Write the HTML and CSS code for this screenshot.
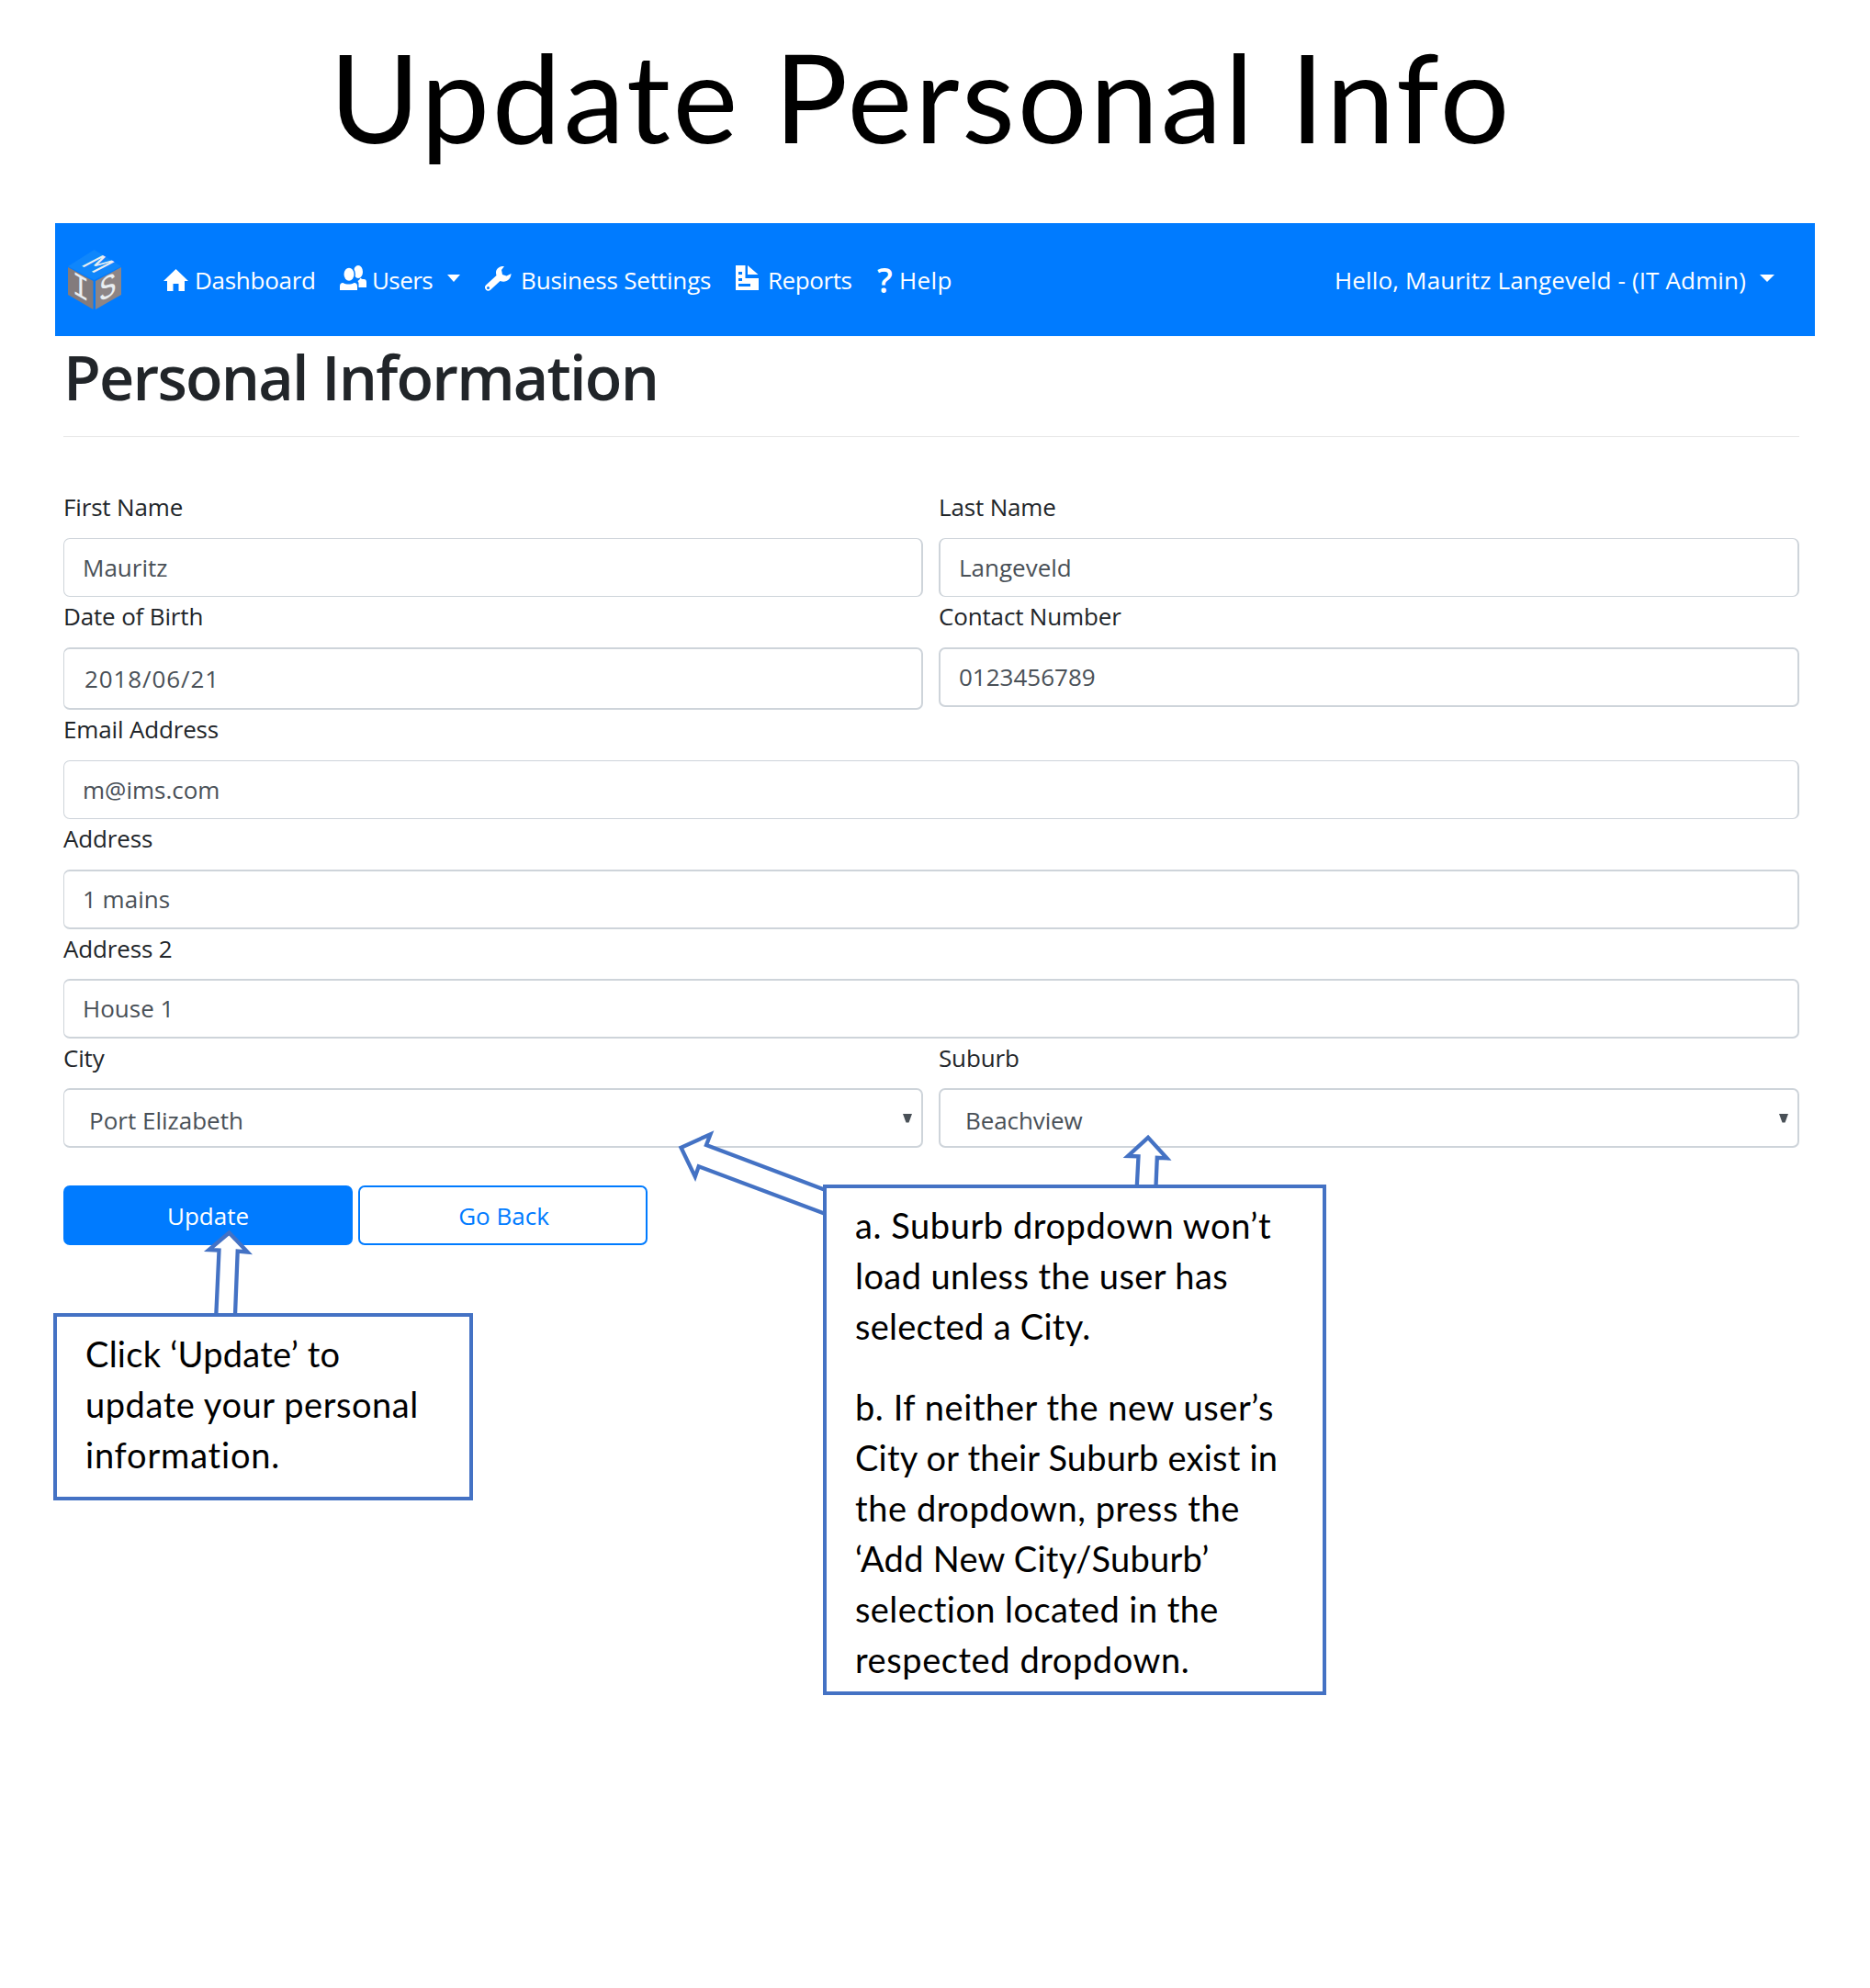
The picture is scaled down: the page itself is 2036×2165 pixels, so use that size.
FILE: index.html
```html
<!DOCTYPE html>
<html lang="en">
<head>
<meta charset="utf-8">
<title>Update Personal Info</title>
<link rel="stylesheet" href="styles.css">
</head>
<body>
<main class="page">
  <h1 class="page-title">Update Personal Info</h1>

  <header class="navbar">
    <svg class="logo" viewBox="0 0 60 68" width="60" height="68">
      <polygon points="29.5,1 59,19 29.5,34 1,19" fill="#0f86fb"/>
      <polygon points="1,20 28.5,35 28.5,66 1,50" fill="#837b7c"/>
      <polygon points="31,35 59,20 59,50 31,66" fill="#8d8586"/>
      <g class="logo-letters">
        <text transform="matrix(.87 .5 -1.1 .58 22.5 22.5)" font-size="31">M</text>
        <text transform="matrix(.87 .5 0 1 15 53)" font-size="36">I</text>
        <text transform="matrix(.87 -.5 0 1 44.5 53)" font-size="36">S</text>
      </g>
    </svg>
    <nav class="nav">
      <a class="nav-item home"><svg width="27" height="24" viewBox="0 0 27 24"><path d="M13.5 0 27 13h-4v11h-6.500v-8h-6v8H4V13H0z"/></svg><span class="t1">Dashboard</span></a>
      <a class="nav-item users"><svg width="29" height="27" viewBox="0 0 29 27"><ellipse cx="20" cy="7" rx="5" ry="7"/><path d="M20.500 24v-5l-1-2c1.500-1 2.500-2 3-3.500.8 1 2 1.500 3.500 1.500 2 0 3 1 3 3.500V24z"/><ellipse cx="10" cy="9.800" rx="7" ry="8.800" fill="#007bff"/><ellipse cx="10" cy="9.800" rx="5.500" ry="7"/><path d="M0 27v-4c0-2.500 1-4 3.500-4 3.500 2 8.500 2 12 0 2.500 0 3.500 1.500 3.500 4v4z"/></svg><span class="t2">Users</span><i class="caret"></i></a>
      <a class="nav-item wrench"><svg width="29" height="27" viewBox="0 0 29 27"><path fill-rule="evenodd" d="M21 0c-5-.5-9 2.500-9 7 0 1.200.2 2 .5 3L1 20.500c-1.500 1.500-1.300 3.500 0 5s3.500 1.700 5 .2L16.500 16c6 2.500 12-1.500 12-8l-5 2.500-4.500-1.500-1-5zM3.500 22a1.500 1.500 0 1 1 0 3 1.500 1.500 0 0 1 0-3z"/></svg><span class="t3">Business Settings</span></a>
      <a class="nav-item report"><svg width="25" height="27" viewBox="0 0 25 27"><path fill-rule="evenodd" d="M0 0h10.500v14H25v13H0zM3 7v3h4V7zm0 7v3h4v-3zm0 6v3h13v-3zM13 0l11.500 10H13z"/></svg><span class="t4">Reports</span></a>
      <a class="nav-item help"><b class="mark">?</b><span class="t5">Help</span></a>
    </nav>
    <a class="account"><span>Hello, Mauritz Langeveld - (IT Admin)</span><i class="caret"></i></a>
  </header>

  <section class="content">
    <h2 class="section-title">Personal Information</h2>
    <form class="form">
      <div class="field thin"><label>First Name</label><input value="Mauritz"></div>
      <div class="field thin right"><label>Last Name</label><input value="Langeveld"></div>
      <div class="field"><label>Date of Birth</label><input class="date" value="2018/06/21"></div>
      <div class="field right"><label>Contact Number</label><input class="phone" value="0123456789"></div>
      <div class="field wide thin"><label>Email Address</label><input value="m@ims.com"></div>
      <div class="field wide"><label>Address</label><input value="1 mains"></div>
      <div class="field wide snug"><label>Address 2</label><input value="House 1"></div>
      <div class="field snug"><label>City</label><div class="select"><select><option>Port Elizabeth</option></select><svg width="10" height="10" viewBox="0 0 10 10"><path d="M0 0h10L6.500 9.500h-3z"/></svg></div></div>
      <div class="field right snug"><label>Suburb</label><div class="select"><select class="tight"><option>Beachview</option></select><svg width="10" height="10" viewBox="0 0 10 10"><path d="M0 0h10L6.500 9.500h-3z"/></svg></div></div>
      <div class="actions">
        <button type="button" class="btn primary">Update</button>
        <button type="button" class="btn outline">Go Back</button>
      </div>
    </form>
  </section>

  <svg class="arrows" width="2036" height="2165" viewBox="0 0 2036 2165">
    <path d="M235.300 1432 238.500 1361.500 227.500 1361 249.500 1342.500 269.500 1363.500 258.700 1362.500 256 1432"/>
    <path d="M900 1296.500 769 1247 773.500 1235.300 741.500 1249.700 756.800 1281.500 760.700 1270.300 900 1322.500"/>
    <path d="M1237.800 1292 1239.500 1259.300 1228 1259 1250 1238.800 1270.500 1261.300 1259.800 1260.800 1258.500 1292"/>
  </svg>

  <aside class="note note-update">
    <p><span class="l2">Click ‘Update’ to</span><br><span class="l5">update your personal</span><br><span class="l8">information.</span></p>
  </aside>
  <aside class="note note-suburb">
    <p><span class="l5">a. Suburb dropdown won’t</span><br>load unless the user has<br><span class="l2">selected a City.</span></p>
    <p><span class="l5">b. If neither the new user’s</span><br><span class="l1">City or their Suburb exist in</span><br><span class="l5">the dropdown, press the</span><br><span class="l2">‘Add New City/Suburb’</span><br>selection located in the<br><span class="l5">respected dropdown.</span></p>
  </aside>
</main>
</body>
</html>
```
FILE: styles.css
```css
* { box-sizing: border-box; }

body {
  margin: 0;
  background: #fff;
  color: #212529;
  font: 26px/42px "Open Sans", "Noto Sans", sans-serif;
}

.page {
  position: relative;
  height: 2165px;
  padding-top: 24px;
  overflow: hidden;
}

.page-title {
  margin: 0 0 58px;
  padding-right: 31px;
  font: 400 134px/161px Lato, sans-serif;
  letter-spacing: 2.7px;
  text-align: center;
  color: #000;
}

/* Navigation */
.navbar {
  display: flex;
  align-items: center;
  height: 123px;
  margin: 0 60px;
  padding: 0 44px 0 13px;
  background: #007bff;
  color: #fff;
}

.logo { margin: 0 45px 0 0; }

.logo-letters {
  font-family: "Liberation Mono", monospace;
  fill: #e9eef2;
  text-anchor: middle;
}

.nav {
  display: grid;
  grid-template-columns: 192px 158px 273px 154px auto;
}

.nav-item, .account {
  display: flex;
  align-items: center;
}

.nav-item svg { fill: #fff; }
.home svg { margin-right: 7px; }
.users svg { margin: 0 6px 4px 0; }
.wrench svg { margin: 0 10px 3px 0; }
.report svg { margin: 0 10px 4px 0; }
.mark { width: 24px; font-size: 37px; font-weight: 600; }

.t1 { letter-spacing: -.28px; }
.t2 { letter-spacing: -.6px; }
.t3 { letter-spacing: -.17px; }
.t4 { letter-spacing: -.43px; }
.t5 { letter-spacing: .4px; }

.caret {
  margin: 0 0 3px 16px;
  border: solid transparent;
  border-width: 8px 7.500px 0;
  border-top-color: #fff;
}

.account {
  margin-left: auto;
  letter-spacing: .15px;
}

.account .caret { border-width: 8px 8.500px 0; margin-left: 15px; }

/* Form */
.content { margin: 0 77px 0 69px; padding-top: 4px; }

.section-title {
  margin: 0 0 55px;
  height: 106px;
  border-bottom: 1px solid #e5e5e5;
  font-size: 66.500px;
  font-weight: 560;
  line-height: 80px;
  letter-spacing: -1.800px;
}

.form {
  display: grid;
  grid-template-columns: 936px 937px;
  column-gap: 17px;
}

.field {
  display: flex;
  flex-direction: column;
  align-items: stretch;
}

.wide, .actions { grid-column: 1 / -1; }

.field label { height: 55px; letter-spacing: -.16px; }
.snug label { height: 54px; }

input, .select {
  width: 100%;
  height: 65px;
  border: 2px solid #ced4da;
  border-left-width: 1px;
  border-radius: 7px;
  background: #fff;
}

input, select {
  margin: 0;
  padding: 0 20px 1px;
  color: #495057;
  font: inherit;
  outline: 0;
}

.right input, .right .select { border-left-width: 2px; }
.thin input { height: 64px; padding-bottom: 0; border-top-width: 1px; border-bottom-width: 1px; }
input.date { height: 68px; padding: 0 0 0 22px; letter-spacing: .9px; }

.select { display: grid; align-items: center; }
.select > * { grid-area: 1 / 1; }

select {
  appearance: none;
  width: 100%;
  height: 61px;
  padding: 5px 0 0 27px;
  border: 0;
  background: none;
}

.tight { letter-spacing: -.1px; }

.select svg {
  justify-self: end;
  margin: 0 10px 0 0;
  fill: #495057;
}

.actions { display: flex; gap: 6px; margin-top: 41px; }

.btn {
  width: 315px;
  height: 65px;
  padding: 0 0 0 2px;
  border: 2px solid #007bff;
  border-radius: 7px;
  font: inherit;
}

.primary { background: #007bff; color: #fff; padding: 0; }
.outline { background: #fff; color: #007bff; }

/* Callouts */
.arrows {
  position: absolute;
  left: 0;
  top: 0;
  fill: #fff;
  stroke: #4472c4;
  stroke-width: 4.300;
  pointer-events: none;
}

.note {
  position: absolute;
  border: 4px solid #4472c4;
  background: #fff;
  color: #000;
  font: 38px/55px Lato, sans-serif;
  letter-spacing: .42px;
  white-space: nowrap;
}

.note p { margin: 0 0 33px; }

.note-update {
  left: 58px;
  top: 1430px;
  width: 457px;
  height: 204px;
  padding: 13px 0 0 31px;
}

.note-suburb {
  left: 896px;
  top: 1290px;
  width: 548px;
  height: 556px;
  padding: 13px 0 0 31px;
}

.l1 { letter-spacing: .2px; }
.l2 { letter-spacing: .26px; }
.l5 { letter-spacing: .57px; }
.l8 { letter-spacing: .8px; }
```
